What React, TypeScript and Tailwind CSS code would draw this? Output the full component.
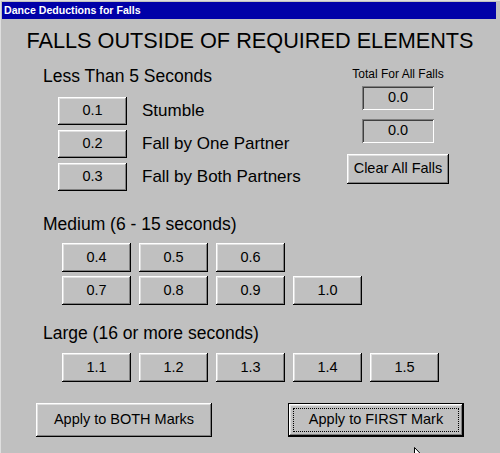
import React from 'react';

const bevel =
  'shadow-[inset_-1px_-1px_0_#000,inset_1px_1px_0_#fff,inset_-2px_-2px_0_#808080,inset_2px_2px_0_#dfdfdf]';

const Btn: React.FC<{ label: string; className?: string }> = ({ label, className = '' }) => (
  <button className={`flex items-center justify-center bg-[#c0c0c0] text-[14.5px] text-black ${bevel} ${className}`}>
    {label}
  </button>
);

const Field: React.FC<{ value: string }> = ({ value }) => (
  <div className="flex h-[24px] w-[72px] items-center justify-center bg-[#c0c0c0] text-[14.5px] shadow-[inset_1px_1px_0_#808080,inset_-1px_-1px_0_#fff,inset_2px_2px_0_#404040]">
    {value}
  </div>
);

const lessThan = [
  { v: '0.1', label: 'Stumble' },
  { v: '0.2', label: 'Fall by One Partner' },
  { v: '0.3', label: 'Fall by Both Partners' },
];

const App: React.FC = () => {
  return (
    <div className="relative h-[453px] w-[500px] overflow-hidden bg-[#c0c0c0] p-[2px] font-['Liberation_Sans',Arial,sans-serif] text-black shadow-[inset_1px_1px_0_#dfdfdf]">
      {/* Title bar */}
      <div className="mr-[2px] flex h-[17px] items-center bg-[#0000a8] pl-[2px] text-[10.6px] font-bold text-white">
        Dance Deductions for Falls
      </div>

      <h1 className="mt-[10px] text-center text-[21.7px] leading-[24px]">FALLS OUTSIDE OF REQUIRED ELEMENTS</h1>

      {/* Less than 5 seconds */}
      <div className="mt-[13px] flex">
        <div className="flex-1 pl-[41px]">
          <div className="text-[17.5px] leading-[20px]">Less Than 5 Seconds</div>
          <div className="mt-[11px] ml-[15px] flex flex-col gap-[5px]">
            {lessThan.map((r) => (
              <div key={r.v} className="flex items-center">
                <Btn label={r.v} className="h-[28px] w-[69px]" />
                <span className="ml-[15px] text-[17px]">{r.label}</span>
              </div>
            ))}
          </div>
        </div>
        <div className="mr-[40px] flex w-[120px] flex-col items-center">
          <div className="mt-[2px] text-[12px] leading-[13px]">Total For All Falls</div>
          <div className="mt-[5px]">
            <Field value="0.0" />
          </div>
          <div className="mt-[9px]">
            <Field value="0.0" />
          </div>
          <Btn label="Clear All Falls" className="mt-[11px] h-[30px] w-[102px]" />
        </div>
      </div>

      {/* Medium */}
      <div className="mt-[23px] pl-[41px]">
        <div className="text-[17.5px] leading-[20px]">Medium (6 - 15 seconds)</div>
        <div className="mt-[9px] ml-[19px] flex flex-col gap-[4px]">
          <div className="flex gap-[8px]">
            {['0.4', '0.5', '0.6'].map((v) => (
              <Btn key={v} label={v} className="h-[29px] w-[69px]" />
            ))}
          </div>
          <div className="flex gap-[8px]">
            {['0.7', '0.8', '0.9', '1.0'].map((v) => (
              <Btn key={v} label={v} className="h-[29px] w-[69px]" />
            ))}
          </div>
        </div>
      </div>

      {/* Large */}
      <div className="mt-[18px] pl-[41px]">
        <div className="text-[17.5px] leading-[20px]">Large (16 or more seconds)</div>
        <div className="mt-[10px] ml-[19px] flex gap-[8px]">
          {['1.1', '1.2', '1.3', '1.4', '1.5'].map((v) => (
            <Btn key={v} label={v} className="h-[29px] w-[69px]" />
          ))}
        </div>
      </div>

      {/* Apply buttons */}
      <div className="mt-[21px] flex pl-[34px]">
        <Btn label="Apply to BOTH Marks" className="h-[34px] w-[176px]" />
        <div className="ml-[76px] h-[34px] w-[176px] border border-black">
          <button className={`flex h-full w-full items-center justify-center bg-[#c0c0c0] p-[4px] text-[14.5px] ${bevel}`}>
            <span className="flex h-full w-full items-center justify-center border border-dotted border-black">
              Apply to FIRST Mark
            </span>
          </button>
        </div>
      </div>

      {/* mouse cursor */}
      <svg className="absolute left-[414px] top-[447px]" width="12" height="19" viewBox="0 0 12 19">
        <path d="M0.5 0.5 L0.5 16 L4 12.5 L6.5 18 L8.5 17 L6 11.5 L11 11.5 Z" fill="#fff" stroke="#000" strokeWidth="1" />
      </svg>
    </div>
  );
};

export default App;
